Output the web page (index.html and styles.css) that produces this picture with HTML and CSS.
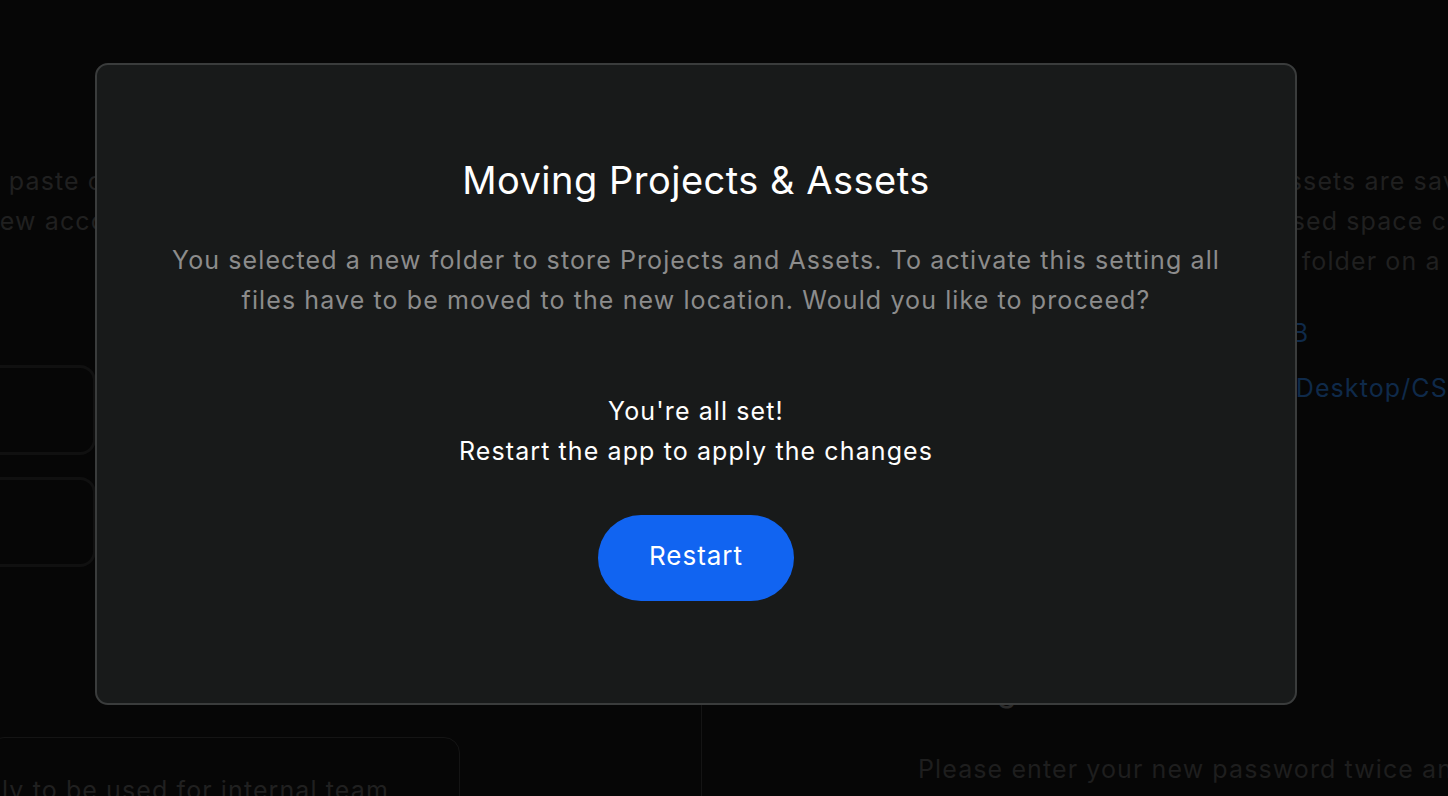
FILE: index.html
```html
<!DOCTYPE html>
<html lang="en">
<head>
    <meta charset="UTF-8">
    <meta name="viewport" content="width=device-width, initial-scale=1.0">
    <title>Settings</title>
    <link rel="stylesheet" href="styles.css">
</head>
<body>
    <div id="page">
        <div class="col-left">
            <p class="intro">
                <span class="line first">Or paste code from your team to link it to your</span>
                <span class="line second">new account and share projects with colleagues.</span>
            </p>
            <div class="field"></div>
            <div class="field"></div>
            <div class="note">
                <p>Only to be used for internal team members and partners.</p>
            </div>
        </div>
        <div class="col-right">
            <div class="storage">
                <p class="desc">
                    <span class="line one">Projects and Assets are saved locally.</span>
                    <span class="line two">Used space counts all files.</span>
                    <span class="line three">Select a folder on a local drive.</span>
                </p>
                <p class="link size">2.4 GB</p>
                <p class="link path">~/Desktop/CS Projects</p>
            </div>
            <div class="password">
                <h2>Change Password</h2>
                <p>Please enter your new password twice and confirm.</p>
            </div>
        </div>
    </div>

    <div id="modal">
        <h1>Moving Projects &amp; Assets</h1>
        <p class="message">You selected a new folder to store Projects and Assets. To activate this setting all<br>files have to be moved to the new location. Would you like to proceed?</p>
        <p class="done">You're all set!<br>Restart the app to apply the changes</p>
        <button id="restart-btn">Restart</button>
    </div>
</body>
</html>
```

FILE: styles.css
```css
body {
    margin: 0;
    height: 796px;
    overflow: hidden;
    background: #060606;
    font-family: Inter, "Noto Sans", sans-serif;
    font-size: 25px;
    letter-spacing: 1.1px;
    color: #fff;
}

#page {
    display: grid;
    grid-template-columns: 701px 1fr;
    height: 100%;
}

p {
    margin: 0;
}

.line {
    display: block;
    white-space: nowrap;
}

/* left column (behind the overlay) */
.col-left {
    overflow: hidden;
    padding-top: 161px;
}

.intro {
    line-height: 40px;
    color: #202020;
    margin-left: -30px;
}

.intro .second {
    margin-left: 14px;
}

.field {
    width: 420px;
    height: 84px;
    margin-left: -330px;
    margin-top: 22px;
    border: 3px solid #101010;
    border-radius: 16px;
}

.intro + .field {
    margin-top: 124px;
}

.note {
    width: 472px;
    height: 120px;
    margin-left: -12px;
    margin-top: 170px;
    border: 1px solid #141414;
    border-radius: 16px;
    box-sizing: border-box;
    padding-top: 32px;
    line-height: 40px;
    color: #202020;
}

.note p {
    width: 430px;
    margin-left: -23px;
}

/* right column */
.col-right {
    overflow: hidden;
    display: flex;
    flex-direction: column;
}

.storage {
    padding-top: 161px;
    padding-left: 401px;
    height: 520px;
    box-sizing: border-box;
}

.desc {
    line-height: 40px;
    color: #202020;
}

.desc .two {
    margin-left: 170px;
}

.desc .three {
    margin-left: 88px;
}

.link {
    line-height: 40px;
    color: #0f2a4a;
    white-space: nowrap;
}

.size {
    margin-top: 32px;
    margin-left: 120px;
}

.path {
    margin-top: 15px;
    margin-left: 166px;
}

.password {
    flex: 1;
    border-left: 1px solid #141414;
    padding-left: 216px;
}

.password h2 {
    margin: 153px 0 40px 0;
    font-size: 30px;
    line-height: 36px;
    font-weight: 500;
    color: #2a2a2a;
    white-space: nowrap;
}

.password p {
    line-height: 40px;
    color: #1e1e1e;
    white-space: nowrap;
}

/* overlay dialog */
#modal {
    position: absolute;
    left: 95px;
    top: 63px;
    width: 1202px;
    height: 642px;
    box-sizing: border-box;
    background: #181a1a;
    border: 2px solid #3a3c3c;
    border-radius: 13px;
    display: flex;
    flex-direction: column;
    align-items: center;
    text-align: center;
    padding-top: 91px;
}

#modal h1 {
    margin: 0 0 36px 0;
    font-size: 38px;
    line-height: 48px;
    font-weight: 400;
    letter-spacing: 0.5px;
}

.message {
    line-height: 40px;
    color: #8c8c8c;
}

.done {
    margin-top: 71px;
    line-height: 40px;
    color: #fff;
}

#restart-btn {
    margin-top: 44px;
    width: 196px;
    height: 86px;
    padding: 0 0 6px 0;
    border: none;
    border-radius: 43px;
    background-color: #1164f1;
    color: #fff;
    font-family: inherit;
    font-size: 26px;
    letter-spacing: 1px;
}
```
